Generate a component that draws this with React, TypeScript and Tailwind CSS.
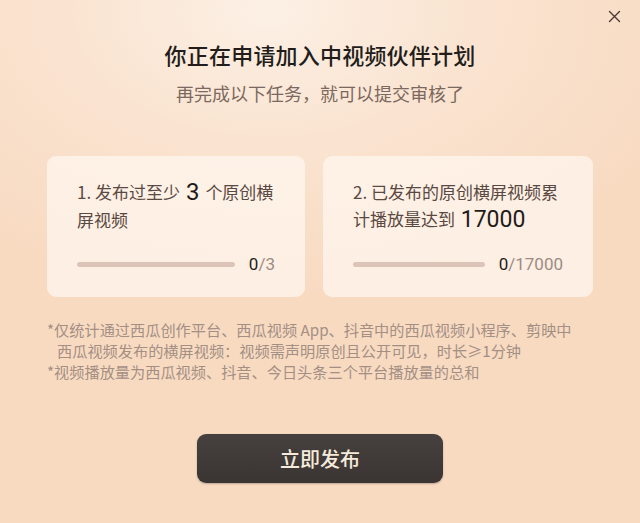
import React from "react";

const cjk = { fontFamily: '"Noto Sans CJK SC", "Noto Sans", sans-serif' };
const num = { fontFamily: 'Roboto, "Noto Sans CJK SC", sans-serif' };

function Card({ width, lines, big, total }: { width: string; lines: [string, string]; big: { text: string; line: 0 | 1; after?: string }; total: string }) {
  return (
    <div className={`${width} h-[141px] rounded-[9px] bg-[rgba(255,247,240,0.72)] pl-[30px] pr-[30px] pt-[22px] flex flex-col`}>
      <div className="text-[17px] leading-[27px] text-[#5a4942]">
        {big.line === 0 ? (
          <>
            {lines[0]}
            <span className="text-[24px] text-[#1f1b19] align-[-1px]" style={num}> {big.text} </span>
            {big.after}
            <br />
            {lines[1]}
          </>
        ) : (
          <>
            {lines[0]}
            <br />
            {lines[1]}
            <span className="text-[23px] text-[#1f1b19] align-[-1px]" style={num}> {big.text}</span>
          </>
        )}
      </div>
      <div className="mt-[19px] flex items-center gap-[14px] h-[24px]">
        <div className="flex-1 h-[5px] rounded-full bg-[#dcc5b8]" />
        <div className="text-[17px] leading-[24px]" style={num}>
          <span className="text-[#1f1b19]">0</span>
          <span className="text-[#9c8c84]">/{total}</span>
        </div>
      </div>
    </div>
  );
}

export default function App() {
  return (
    <div
      className="relative w-[640px] h-[523px] overflow-hidden bg-[radial-gradient(ellipse_70%_55%_at_42%_2%,#fcf0e5_0%,#fae4d1_45%,#f8dac1_100%)] flex flex-col items-center"
      style={cjk}
    >
      <svg className="absolute left-[608px] top-[10px]" width="13" height="13" viewBox="0 0 13 13">
        <path d="M1.5 1.5 L11.5 11.5 M11.5 1.5 L1.5 11.5" stroke="#4b3a33" strokeWidth="1.4" strokeLinecap="round" />
      </svg>
      <h1 className="mt-[39px] text-[22px] leading-[30px] font-medium text-[#221d1b] tracking-[0.2px]">你正在申请加入中视频伙伴计划</h1>
      <p className="mt-[11px] text-[18px] leading-[26px] text-[#7c685e]">再完成以下任务，就可以提交审核了</p>

      <div className="mt-[50px] flex gap-[18px] self-start ml-[47px]">
        <Card
          width="w-[258px]"
          lines={["1. 发布过至少", "屏视频"]}
          big={{ text: "3", line: 0, after: "个原创横" }}
          total="3"
        />
        <Card
          width="w-[270px]"
          lines={["2. 已发布的原创横屏视频累", "计播放量达到"]}
          big={{ text: "17000", line: 1 }}
          total="17000"
        />
      </div>

      <div className="mt-[22px] self-start ml-[47px] text-[15.2px] leading-[21px] text-[#a38f84]">
        <div>*仅统计通过西瓜创作平台、西瓜视频 App、抖音中的西瓜视频小程序、剪映中</div>
        <div className="pl-[10px]">西瓜视频发布的横屏视频：视频需声明原创且公开可见，时长≥1分钟</div>
        <div>*视频播放量为西瓜视频、抖音、今日头条三个平台播放量的总和</div>
      </div>

      <button className="mt-[52px] w-[246px] h-[49px] rounded-[9px] bg-[linear-gradient(180deg,#46413e_0%,#3a3532_100%)] text-[20px] font-medium text-[#f6eadc] shadow-[0_1px_2px_rgba(0,0,0,0.25)]">
        立即发布
      </button>
    </div>
  );
}
